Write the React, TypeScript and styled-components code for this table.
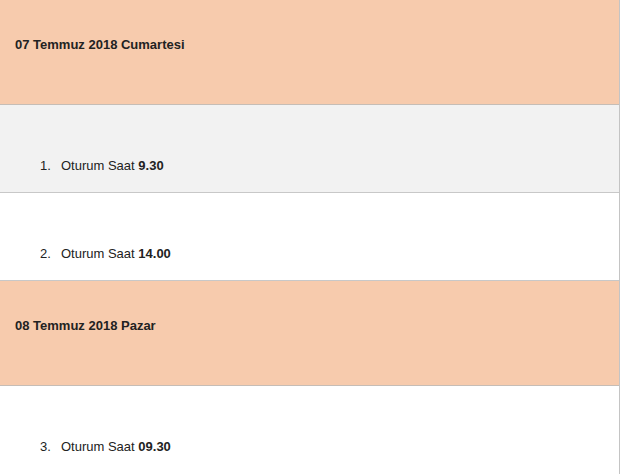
import styled, { createGlobalStyle } from "styled-components";

const GlobalStyle = createGlobalStyle`
  html, body {
    margin: 0;
    padding: 0;
    background: #fff;
  }
  body {
    font-family: "Liberation Sans", Arial, sans-serif;
    font-size: 13px;
    color: #222;
  }
`;

type Session = { no: number; time: string; shaded?: boolean };
type Day = { title: string; sessions: Session[] };

const days: Day[] = [
  {
    title: "07 Temmuz 2018 Cumartesi",
    sessions: [
      { no: 1, time: "9.30", shaded: true },
      { no: 2, time: "14.00" },
    ],
  },
  {
    title: "08 Temmuz 2018 Pazar",
    sessions: [{ no: 3, time: "09.30" }],
  },
];

const App = () => {
  return (
    <>
      <GlobalStyle />
      <Schedule>
        {days.map((day) => (
          <section key={day.title}>
            <DayHeader>{day.title}</DayHeader>
            {day.sessions.map((s) => (
              <SessionRow key={s.no} $shaded={s.shaded}>
                <span className="session-no">{s.no}.</span>
                <span>
                  Oturum Saat <b>{s.time}</b>
                </span>
              </SessionRow>
            ))}
          </section>
        ))}
      </Schedule>
    </>
  );
};

export default App;

const Schedule = styled.div`
  width: 620px;
  height: 474px;
  overflow: hidden;
  box-sizing: border-box;
  border-right: 1px solid #c4c4c4;
`;

const DayHeader = styled.h3`
  margin: 0;
  height: 105px;
  box-sizing: border-box;
  padding: 37px 15px 0;
  line-height: 15px;
  font-size: 13px;
  font-weight: bold;
  color: #222;
  background: #f7cbad;
  border-bottom: 1px solid #c6bdb6;
`;

const SessionRow = styled.div<{ $shaded?: boolean }>`
  display: flex;
  align-items: baseline;
  height: 88px;
  box-sizing: border-box;
  padding: 53px 0 0 40px;
  line-height: 15px;
  background: ${({ $shaded }) => ($shaded ? "#f2f2f2" : "#fff")};
  border-bottom: 1px solid #c8c8c8;

  section:last-child > &:last-child {
    border-bottom: none;
  }

  .session-no {
    width: 21px;
  }

  b {
    font-weight: bold;
  }
`;
